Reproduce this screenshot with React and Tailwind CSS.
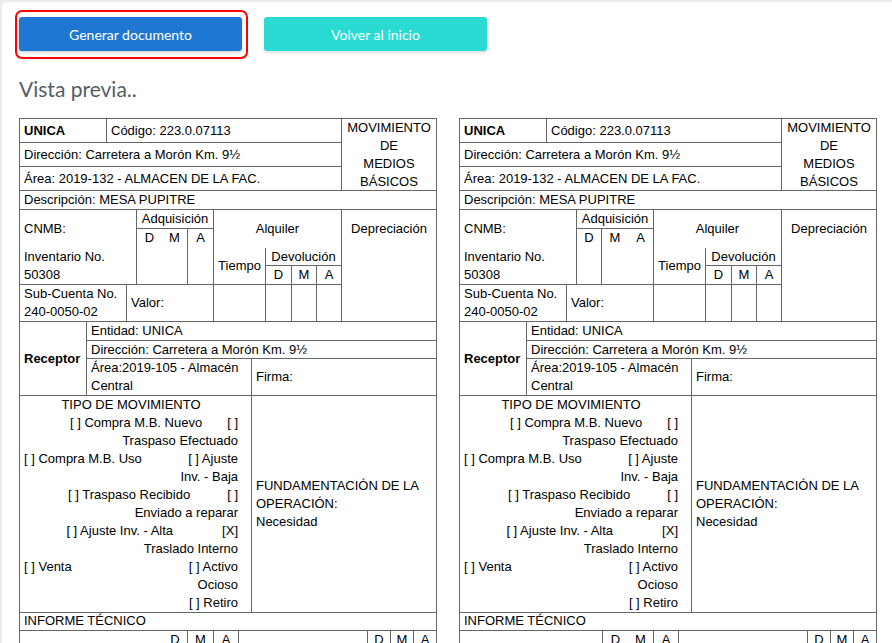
const Cell = ({ className = "", children }) => (
  <div className={`border-r border-b border-[#666] px-1 ${className}`}>{children}</div>
);

function FormTable({ variant }) {
  const left = variant === "left";
  return (
    <div className="w-[418px] shrink-0 border-l border-t border-[#666] text-[13px] leading-[18px] text-black font-['Liberation_Sans',Arial,sans-serif]">
      {/* Encabezado */}
      <div className="grid grid-cols-[87px_235px_95px] grid-rows-[24px_24px_24px_19px]">
        <Cell className="col-start-1 row-start-1 flex items-center font-bold">UNICA</Cell>
        <Cell className="col-start-2 row-start-1 flex items-center">Código: 223.0.07113</Cell>
        <Cell className="col-start-3 row-start-1 row-span-3 flex items-center justify-center text-center">
          <span>
            MOVIMIENTO
            <br />
            DE
            <br />
            MEDIOS
            <br />
            BÁSICOS
          </span>
        </Cell>
        <Cell className="col-start-1 col-span-2 row-start-2 flex items-center">
          Dirección: Carretera a Morón Km. 9½
        </Cell>
        <Cell className="col-start-1 col-span-2 row-start-3 flex items-center">
          Área: 2019-132 - ALMACEN DE LA FAC.
        </Cell>
        <Cell className="col-start-1 col-span-3 row-start-4 flex items-center">
          Descripción: MESA PUPITRE
        </Cell>
      </div>

      {/* CNMB / Adquisición / Alquiler */}
      <div className="grid grid-cols-[107px_10px_25px_26px_26px_52px_26px_25px_25px_95px] grid-rows-[19px_19px_18px_19px_37px]">
        <div className="col-start-1 col-span-2 row-start-1 row-span-2 flex items-center border-r border-[#666] px-1">
          CNMB:
        </div>
        <Cell className="col-start-1 col-span-2 row-start-3 row-span-2 flex items-center">
          Inventario No. 50308
        </Cell>
        <Cell className="col-start-3 col-span-3 row-start-1 text-center">Adquisición</Cell>
        <div
          className={`col-start-3 row-start-2 row-span-3 border-b border-[#666] text-center ${
            left ? "" : "border-r"
          }`}
        >
          D
        </div>
        <div
          className={`col-start-4 row-start-2 row-span-3 border-b border-[#666] text-center ${
            left ? "border-r" : ""
          }`}
        >
          M
        </div>
        <div className="col-start-5 row-start-2 row-span-3 border-r border-b border-[#666] text-center">A</div>
        <div className="col-start-6 col-span-4 row-start-1 row-span-2 flex items-center justify-center border-r border-[#666]">
          Alquiler
        </div>
        <div className="col-start-6 row-start-3 row-span-2 flex items-center justify-center border-r border-b border-[#666]">
          Tiempo
        </div>
        <div className="col-start-7 col-span-3 row-start-3 border-r border-b border-[#666] text-center">
          Devolución
        </div>
        <div className="col-start-7 row-start-4 border-r border-b border-[#666] text-center">D</div>
        <div className="col-start-8 row-start-4 border-r border-b border-[#666] text-center">M</div>
        <div className="col-start-9 row-start-4 border-r border-b border-[#666] text-center">A</div>
        <Cell className="col-start-10 row-start-1 row-span-5 pt-[10px] text-center">Depreciación</Cell>
        <Cell className="col-start-1 row-start-5">Sub-Cuenta No. 240-0050-02</Cell>
        <Cell className="col-start-2 col-span-4 row-start-5 flex items-center">Valor:</Cell>
        <div className="col-start-6 row-start-5 border-r border-b border-[#666]" />
        <div className="col-start-7 row-start-5 border-r border-b border-[#666]" />
        <div className="col-start-8 row-start-5 border-r border-b border-[#666]" />
        <div className="col-start-9 row-start-5 border-r border-b border-[#666]" />
      </div>

      {/* Receptor */}
      <div className="grid grid-cols-[67px_165px_185px] grid-rows-[19px_18px_37px]">
        <Cell className="col-start-1 row-start-1 row-span-3 flex items-center font-bold">Receptor</Cell>
        <Cell className="col-start-2 col-span-2 row-start-1">Entidad: UNICA</Cell>
        <Cell className="col-start-2 col-span-2 row-start-2">Dirección: Carretera a Morón Km. 9½</Cell>
        <Cell className="col-start-2 row-start-3">Área:2019-105 - Almacén Central</Cell>
        <Cell className="col-start-3 row-start-3 flex items-center">Firma:</Cell>
      </div>

      {/* Tipo de movimiento */}
      <div className="grid grid-cols-[232px_185px] h-[216px]">
        <div className="border-r border-b border-[#666] pl-1 pr-[13px]">
          <div className="text-center">TIPO DE MOVIMIENTO</div>
          <div className="flex justify-end">
            <span>[ ] Compra M.B. Nuevo</span>
            <span className="ml-[25px]">[ ]</span>
          </div>
          <div className="text-right">Traspaso Efectuado</div>
          <div className="flex justify-between">
            <span>[ ] Compra M.B. Uso</span>
            <span>[ ] Ajuste</span>
          </div>
          <div className="text-right">Inv. - Baja</div>
          <div className="flex justify-end">
            <span>[ ] Traspaso Recibido</span>
            <span className="ml-[37px]">[ ]</span>
          </div>
          <div className="text-right">Enviado a reparar</div>
          <div className="flex justify-end">
            <span>[ ] Ajuste Inv. - Alta</span>
            <span className="ml-[49px]">[X]</span>
          </div>
          <div className="text-right">Traslado Interno</div>
          <div className="flex justify-between">
            <span>[ ] Venta</span>
            <span>[ ] Activo</span>
          </div>
          <div className="text-right">Ocioso</div>
          <div className="text-right">[ ] Retiro</div>
        </div>
        <Cell className="flex flex-col justify-center">
          <span>FUNDAMENTACIÓN DE LA OPERACIÓN:</span>
          <span>Necesidad</span>
        </Cell>
      </div>

      {/* Informe técnico */}
      <Cell className="h-[19px]">INFORME TÉCNICO</Cell>
      <div className="grid grid-cols-[143px_25px_26px_25px_129px_23px_23px_23px] grid-rows-[19px_19px]">
        <div className={`border-b border-[#666] ${left ? "" : "border-r"}`} />
        <div className={`border-b border-[#666] text-center ${left ? "border-r" : ""}`}>D</div>
        <div className="border-r border-b border-[#666] text-center">M</div>
        <div className="border-r border-b border-[#666] text-center">A</div>
        <div className="border-r border-b border-[#666]" />
        <div className="border-r border-b border-[#666] text-center">D</div>
        <div className="border-r border-b border-[#666] text-center">M</div>
        <div className="border-r border-b border-[#666] text-center">A</div>
      </div>
    </div>
  );
}

export default function App() {
  return (
    <div className="h-screen overflow-hidden bg-[#ececec] pl-[2px] pt-[2px]">
      <div className="h-full rounded-tl-[4px] bg-white pl-[13px] pt-[8px] font-['Lato','Open_Sans',sans-serif]">
        <div className="flex items-start">
          <div className="rounded-[7px] border-2 border-[#ff0000] pt-[5px] pb-[6px] pl-[2px] pr-[4px]">
            <button className="h-[34px] w-[223px] rounded-[3px] bg-[#1e78d3] text-[14px] text-white shadow-[0_2px_3px_rgba(0,0,0,0.15)]">
              Generar documento
            </button>
          </div>
          <button className="ml-[16px] mt-[7px] h-[34px] w-[223px] rounded-[3px] bg-[#2adbd3] text-[14px] text-white shadow-[0_2px_3px_rgba(0,0,0,0.12)]">
            Volver al inicio
          </button>
        </div>
        <h2 className="ml-[4px] mt-[16px] text-[21px] leading-[28px] text-[#545d66]">Vista previa..</h2>
        <div className="ml-[4px] mt-[15px] flex gap-[22px]">
          <FormTable variant="left" />
          <FormTable variant="right" />
        </div>
      </div>
    </div>
  );
}
